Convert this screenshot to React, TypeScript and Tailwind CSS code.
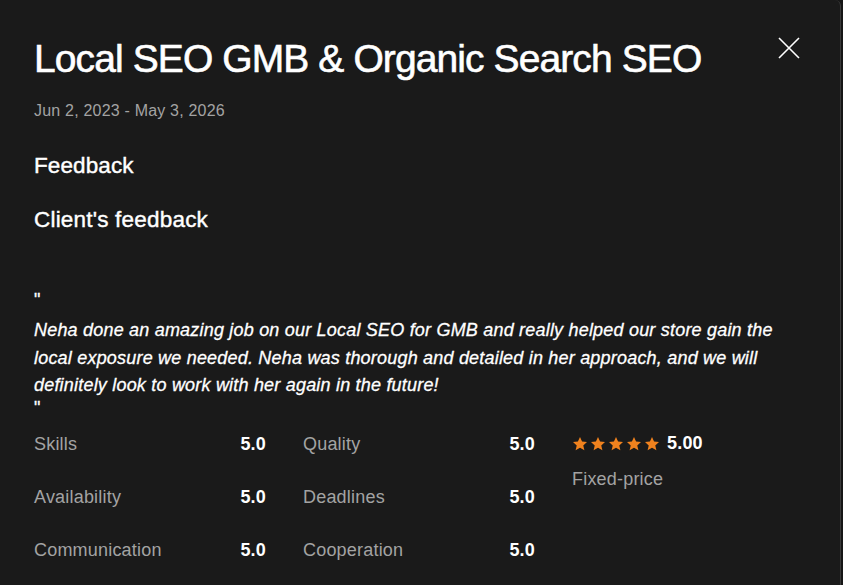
import React from "react";

const ratings = [
  [
    { label: "Skills", value: "5.0" },
    { label: "Availability", value: "5.0" },
    { label: "Communication", value: "5.0" },
  ],
  [
    { label: "Quality", value: "5.0" },
    { label: "Deadlines", value: "5.0" },
    { label: "Cooperation", value: "5.0" },
  ],
];

function Star() {
  return (
    <svg viewBox="0 0 24 24" className="h-[16px] w-[16px]" fill="#f0821e">
      <path d="M12 1.5l3.1 6.9 7.4.7-5.6 5 1.7 7.4L12 17.6l-6.6 3.9 1.7-7.4-5.6-5 7.4-.7z" />
    </svg>
  );
}

export default function App() {
  return (
    <div className="flex min-h-[585px] w-[843px] bg-[#161616] font-['Liberation_Sans',Arial,sans-serif]">
      <div className="relative w-[841px] rounded-tr-md border-r border-[#3a3a3a] bg-[#1a1a1a] px-[34px] pt-[38px]">
        {/* Close */}
        <button className="absolute right-[40px] top-[37px] text-white">
          <svg viewBox="0 0 22 22" className="h-[22px] w-[22px]" stroke="currentColor" strokeWidth="1.6">
            <path d="M1 1l20 20M21 1L1 21" />
          </svg>
        </button>

        <h1 className="text-[39px] leading-[42px] tracking-[-0.9px] text-white [-webkit-text-stroke:0.6px_white]">
          Local SEO GMB &amp; Organic Search SEO
        </h1>
        <p className="mt-[21px] text-[16px] leading-5 tracking-[0.2px] text-[#a3a3a3]">Jun 2, 2023 - May 3, 2026</p>

        <h2 className="mt-[31px] text-[22.5px] leading-7 tracking-[0.1px] text-white [-webkit-text-stroke:0.4px_white]">Feedback</h2>
        <h3 className="mt-[26px] text-[22.5px] leading-7 tracking-[0.2px] text-white [-webkit-text-stroke:0.4px_white]">Client's feedback</h3>

        <div className="mt-[58px] text-[18px] italic leading-[27.5px] tracking-[0.2px] text-white [-webkit-text-stroke:0.3px_white]">
          <div className="not-italic leading-[16px]">"</div>
          <p className="mt-[9px]">
            Neha done an amazing job on our Local SEO for GMB and really helped our store gain the local exposure
            we needed. Neha was thorough and detailed in her approach, and we will definitely look to work with
            her again in the future!
          </p>
          <div className="not-italic leading-[16px]">"</div>
        </div>

        <div className="mt-[17px] flex">
          {ratings.map((col, i) => (
            <div key={i} className="mr-[37px] flex w-[232px] flex-col gap-[31px]">
              {col.map((r) => (
                <div key={r.label} className="flex items-center justify-between text-[18px] leading-[22px] tracking-[0.2px]">
                  <span className="text-[#a3a3a3]">{r.label}</span>
                  <span className="font-bold text-white">{r.value}</span>
                </div>
              ))}
            </div>
          ))}
          <div className="flex flex-col">
            <div className="flex h-[22px] items-center gap-[2px]">
              <Star />
              <Star />
              <Star />
              <Star />
              <Star />
              <span className="ml-[5px] text-[18px] font-bold tracking-[0.2px] text-white">5.00</span>
            </div>
            <span className="mt-[13px] text-[18px] leading-[22px] tracking-[0.2px] text-[#a3a3a3]">Fixed-price</span>
          </div>
        </div>
      </div>
    </div>
  );
}
